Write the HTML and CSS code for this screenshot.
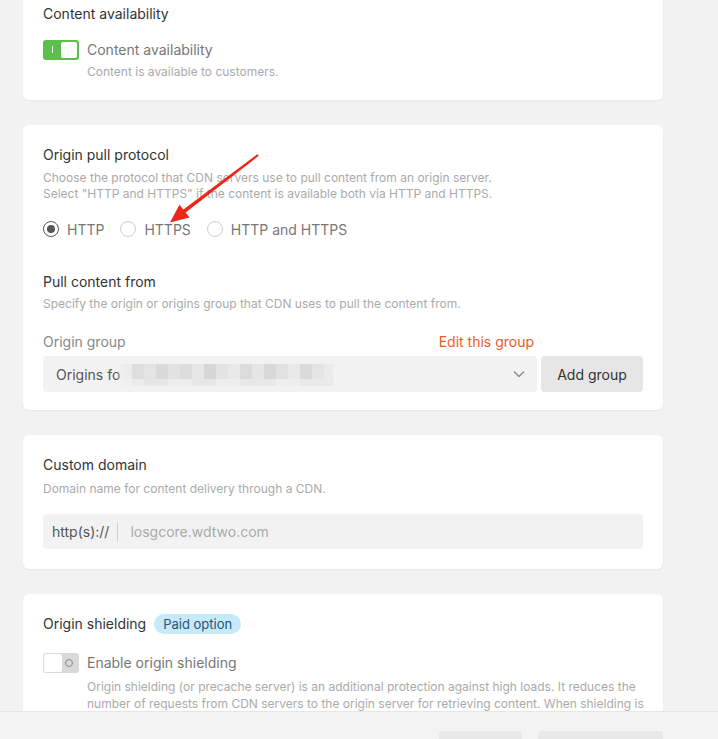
FILE: index.html
```html
<!DOCTYPE html>
<html lang="en">
<head>
<meta charset="utf-8">
<title>CDN resource settings</title>
<link rel="stylesheet" href="styles.css">
</head>
<body>
<main class="page">
  <section class="card card-first">
    <h3 class="title">Content availability</h3>
    <div class="toggle-row">
      <span class="toggle toggle-on"><span class="knob"></span></span>
      <span class="toggle-label">Content availability</span>
    </div>
    <p class="desc desc-indent">Content is available to customers.</p>
  </section>

  <section class="card">
    <h3 class="title">Origin pull protocol</h3>
    <p class="desc desc-top">Choose the protocol that CDN servers use to pull content from an origin server.<br>Select "HTTP and HTTPS" if the content is available both via HTTP and HTTPS.</p>
    <div class="radios">
      <label class="radio"><span class="circle checked"></span>HTTP</label>
      <label class="radio"><span class="circle"></span>HTTPS</label>
      <label class="radio"><span class="circle"></span>HTTP and HTTPS</label>
    </div>
    <h3 class="title title-section">Pull content from</h3>
    <p class="desc desc-sub">Specify the origin or origins group that CDN uses to pull the content from.</p>
    <div class="group-grid">
      <div class="group-label-row">
        <span class="field-label">Origin group</span>
        <a class="link">Edit this group</a>
      </div>
      <div></div>
      <div class="select">
        <span class="select-text">Origins fo</span>
        <span class="blur"><span class="blur-top"></span><span class="blur-bottom"></span></span>
        <svg class="chevron" width="12" height="8" viewBox="0 0 12 8"><path d="M1 1.5 L6 6.5 L11 1.5" fill="none" stroke="#8a8a8a" stroke-width="1.3"/></svg>
      </div>
      <button class="btn">Add group</button>
    </div>
  </section>

  <section class="card">
    <h3 class="title">Custom domain</h3>
    <p class="desc desc-cd">Domain name for content delivery through a CDN.</p>
    <div class="domain-input">
      <span class="prefix">http(s)://</span>
      <span class="sep"></span>
      <span class="placeholder">losgcore.wdtwo.com</span>
    </div>
  </section>

  <section class="card">
    <div class="title-row">
      <h3 class="title">Origin shielding</h3>
      <span class="badge">Paid option</span>
    </div>
    <div class="toggle-row toggle-row-2">
      <span class="toggle toggle-off"><span class="knob"></span><span class="off-mark"></span></span>
      <span class="toggle-label">Enable origin shielding</span>
    </div>
    <p class="desc desc-indent desc-long">Origin shielding (or precache server) is an additional protection against high loads. It reduces the number of requests from CDN servers to the origin server for retrieving content. When shielding is enabled, all requests go through a precache server first.</p>
  </section>
</main>

<footer class="footer">
  <button class="fbtn fbtn-a"></button>
  <button class="fbtn fbtn-b"></button>
</footer>

<svg class="arrow" width="718" height="739" viewBox="0 0 718 739">
  <polygon points="257.3,154.2 183.4,209.6 179.4,204.8 170,222.5 189.6,217.4 185.6,212.6 258.7,155.8" fill="#ee2618"/>
</svg>
</body>
</html>
```

FILE: styles.css
```css
* { box-sizing: border-box; }
html, body {
  margin: 0;
  padding: 0;
  background: #f2f2f2;
  font-family: Inter, "Noto Sans", "Liberation Sans", sans-serif;
  color: #333;
}
body { position: relative; height: 739px; overflow: hidden; }

.page {
  display: flex;
  flex-direction: column;
  gap: 25px;
  width: 640px;
  margin-left: 23px;
  margin-top: -16px;
}

.card {
  background: #fff;
  border-radius: 6px;
  box-shadow: 0 1px 2px rgba(0,0,0,0.05);
  padding: 20px 20px 20px;
}
.card:nth-child(2) { padding-bottom: 18px; }

.title {
  margin: 0;
  font-size: 14px;
  font-weight: 400;
  line-height: 20px;
  color: #333;
}
.title-section { margin-top: 33px; }

.desc {
  margin: 0;
  font-size: 12px;
  line-height: 16px;
  color: #aaa;
}
.desc-top { margin-top: 5px; }
.desc-sub { margin-top: 4px; }
.desc-cd { margin-top: 6px; }
.desc-indent { margin-left: 44px; margin-top: 4px; }
.desc-long { margin-top: 5px; line-height: 17px; margin-right: -6px; }

.toggle-row {
  display: flex;
  align-items: center;
  gap: 8px;
  margin-top: 16px;
  height: 20px;
}
.toggle-row-2 { margin-top: 19px; }
.toggle-label { font-size: 14px; color: #777; line-height: 20px; }

.toggle {
  position: relative;
  width: 36px;
  height: 20px;
  border-radius: 3px;
  flex: none;
}
.toggle-on { background: #5cbf4c; }
.toggle-on .knob {
  position: absolute;
  right: 2px; top: 2px;
  width: 16px; height: 16px;
  background: #fff;
  border-radius: 2px;
}
.toggle-on::before {
  content: "";
  position: absolute;
  left: 9px; top: 6px;
  width: 1px; height: 7px;
  background: #fff;
}
.toggle-off { background: #d9d9d9; }
.toggle-off .knob {
  position: absolute;
  left: 1px; top: 1px;
  width: 18px; height: 18px;
  background: #fff;
  border-radius: 2px;
}
.off-mark {
  position: absolute;
  right: 6px; top: 6px;
  width: 8px; height: 8px;
  border: 1.3px solid #888;
  border-radius: 50%;
}

.radios {
  display: flex;
  align-items: center;
  gap: 16px;
  margin-top: 17px;
  height: 20px;
}
.radio {
  display: flex;
  align-items: center;
  gap: 8px;
  font-size: 14px;
  color: #777;
}
.circle {
  width: 16px; height: 16px;
  border: 1px solid #cfcfcf;
  border-radius: 50%;
  position: relative;
  flex: none;
}
.circle.checked { border-color: #555; }
.circle.checked::after {
  content: "";
  position: absolute;
  left: 3px; top: 3px;
  width: 8px; height: 8px;
  border-radius: 50%;
  background: #555;
}

.group-grid {
  display: grid;
  grid-template-columns: 1fr 102px;
  column-gap: 4px;
  row-gap: 4px;
  margin-top: 20px;
}
.group-label-row {
  display: flex;
  justify-content: space-between;
  align-items: center;
  line-height: 20px;
  padding-right: 3px;
}
.field-label { font-size: 14px; color: #888; }
.link { font-size: 14px; color: #f25a1f; }

.select {
  display: flex;
  align-items: center;
  height: 36px;
  background: #f2f2f2;
  border-radius: 4px;
  padding-left: 13px;
  padding-right: 12px;
}
.select-text { font-size: 14px; color: #555; }
.blur {
  display: flex;
  flex-direction: column;
  width: 216px;
  height: 22px;
  margin-left: -3px;
  margin-top: 2px;
  filter: blur(0.5px);
  -webkit-mask-image: linear-gradient(90deg, transparent 0, #000 8px);
  mask-image: linear-gradient(90deg, transparent 0, #000 8px);
}
.blur-top {
  height: 15px;
  background: linear-gradient(90deg,
    #ececec 0 15px, #dedede 15px 27px, #e4e4e4 27px 39px, #d9d9d9 39px 51px,
    #e2e2e2 51px 63px, #dcdcdc 63px 75px, #e6e6e6 75px 87px, #d6d6d6 87px 99px,
    #e3e3e3 99px 111px, #e9e9e9 111px 123px, #dbdbdb 123px 135px, #e5e5e5 135px 147px,
    #d8d8d8 147px 159px, #e1e1e1 159px 171px, #e9e9e9 171px 183px, #dadada 183px 195px,
    #e4e4e4 195px 207px, #ebebeb 207px 216px);
}
.blur-bottom {
  height: 7px;
  background: linear-gradient(90deg,
    #efefef 0 15px, #ebebeb 15px 27px, #e6e6e6 27px 51px, #ededed 51px 75px,
    #e7e7e7 75px 99px, #eeeeee 99px 123px, #e8e8e8 123px 159px, #eeeeee 159px 183px,
    #e9e9e9 183px 216px);
}
.chevron { margin-left: auto; }

.btn {
  height: 36px;
  border: none;
  border-radius: 4px;
  background: #e6e6e6;
  font-family: inherit;
  font-size: 14px;
  color: #333;
  padding: 0;
}

.domain-input {
  display: flex;
  align-items: center;
  height: 35px;
  margin-top: 17px;
  background: #f2f2f2;
  border-radius: 4px;
  padding-left: 9px;
}
.prefix { font-size: 14px; color: #555; }
.sep {
  width: 1px; height: 18px;
  background: #cfcfcf;
  margin: 0 12px 0 8px;
}
.placeholder { font-size: 14px; color: #aaa; }

.title-row {
  display: flex;
  align-items: center;
  gap: 8px;
  height: 20px;
}
.badge {
  height: 20px;
  line-height: 20px;
  padding: 0 9px;
  border-radius: 10px;
  background: #c7eafb;
  color: #2a5570;
  font-size: 13px;
}

.footer {
  position: fixed;
  left: 0; right: 0; bottom: 0;
  height: 28px;
  background: #f3f3f3;
  border-top: 1px solid #e6e6e6;
  display: flex;
  justify-content: flex-end;
  gap: 16px;
  padding: 19px 55px 0 0;
}
.fbtn {
  height: 36px;
  border: none;
  border-radius: 4px;
  background: #e8e8e8;
  flex: none;
}
.fbtn-a { width: 83px; }
.fbtn-b { width: 125px; }

.arrow {
  position: absolute;
  left: 0; top: 0;
  pointer-events: none;
}
```
